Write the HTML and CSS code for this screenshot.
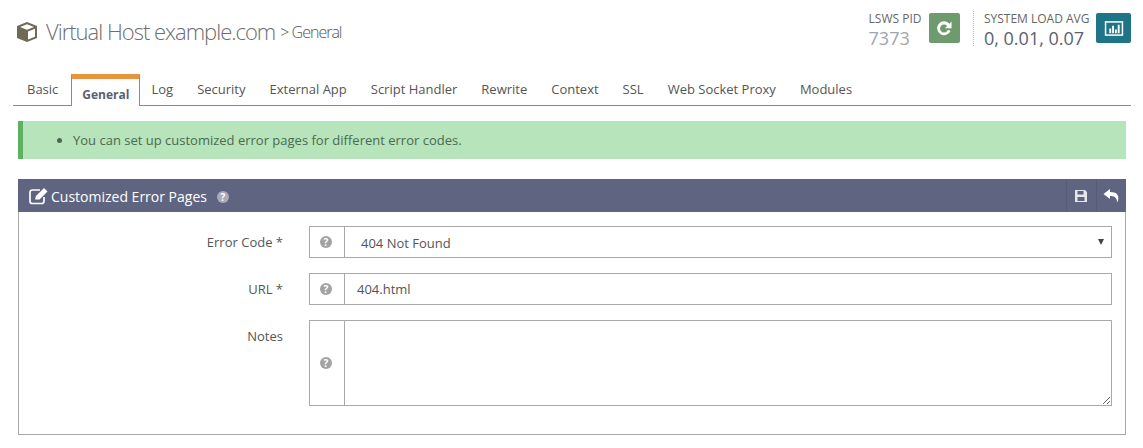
FILE: index.html
```html
<!DOCTYPE html>
<html lang="en">
<head>
<meta charset="utf-8">
<title>Virtual Host example.com</title>
<link rel="stylesheet" href="styles.css">
</head>
<body>
<header class="page-head">
  <div class="title">
    <svg class="cube" width="22" height="22" viewBox="0 0 22 22"><path d="M11 1 L21 5 V17 L11 21 L1 17 V5 Z" fill="#6f6a55"/><path d="M11 3.2 L18 6 L11 8.8 L4 6 Z" fill="#fff"/><path d="M12 10.5 L19 7.7 V15.8 L12 18.6 Z" fill="#fff"/></svg>
    <h1>Virtual Host example.com</h1><span class="crumb">&gt; General</span>
  </div>
  <div class="stats">
    <div class="stat pid">
      <div class="stat-text"><div class="stat-label">LSWS PID</div><div class="stat-value pid-value">7373</div></div>
      <span class="btn btn-green"><svg width="20" height="20" viewBox="0 0 18 18"><path d="M14 5.2 A6.3 6.3 0 1 0 15 11.5 L12.4 10.8 A3.6 3.6 0 1 1 11.8 7.2 L9.8 9.2 H15.8 V3.2 Z" fill="#fff"/></svg></span>
    </div>
    <div class="stat load">
      <div class="stat-text"><div class="stat-label">SYSTEM LOAD AVG</div><div class="stat-value">0, 0.01, 0.07</div></div>
      <span class="btn btn-teal"><svg width="20" height="15" viewBox="0 0 20 16"><rect x="1" y="1" width="18" height="14" fill="none" stroke="#fff" stroke-width="1.6"/><path d="M5 8h2v5H5zM8 5h2v8H8zM11 9h2v4h-2zM14 4h2v9h-2z" fill="#fff"/></svg></span>
    </div>
  </div>
</header>
<nav class="tabs">
  <a class="tab">Basic</a><a class="tab active">General</a><a class="tab">Log</a><a class="tab">Security</a><a class="tab">External App</a><a class="tab">Script Handler</a><a class="tab">Rewrite</a><a class="tab">Context</a><a class="tab">SSL</a><a class="tab">Web Socket Proxy</a><a class="tab">Modules</a>
</nav>
<div class="alert"><ul><li>You can set up customized error pages for different error codes.</li></ul></div>
<section class="panel">
  <div class="panel-head">
    <svg class="edit" width="20" height="18" viewBox="0 0 20 18"><path d="M15 10v4.2A2.3 2.3 0 0 1 12.700 16.500H3.300A2.300 2.300 0 0 1 1 14.200V5.300A2.300 2.300 0 0 1 3.300 3H11" fill="none" stroke="#fff" stroke-width="1.700"/><path d="M6 12.500 L7 9 L15 1 L18.500 4.500 L10.500 12.500 Z" fill="#fff"/></svg>
    <span class="panel-title">Customized Error Pages</span>
    <svg class="q q-head" viewBox="0 0 12 12"><circle cx="6" cy="6" r="6" fill="#a9abb8"/><text x="6" y="9.500" text-anchor="middle" class="q-mark">?</text></svg>
    <div class="panel-actions">
      <span class="action action-save"><svg width="14" height="14" viewBox="0 0 14 14"><path d="M1 1H11L13 3V13H1Z" fill="#e6e7ec"/><rect x="3.500" y="2" width="6" height="3.500" fill="#5f6580"/><rect x="3.500" y="8" width="7" height="4" fill="#5f6580"/></svg></span>
      <span class="action"><svg width="17" height="15" viewBox="0 0 17 15"><path d="M7 1 L0.500 6 L7 11 V8 C11 8 13.500 9 14.500 14.500 C16.500 9 15.500 4 7 4 Z" fill="#fff"/></svg></span>
    </div>
  </div>
  <div class="panel-body">
    <div class="row">
      <label class="row-label">Error Code *</label>
      <div class="group">
        <span class="addon"><svg class="q" viewBox="0 0 12 12"><circle cx="6" cy="6" r="6" fill="#a3a3a3"/><text x="6" y="9.500" text-anchor="middle" class="q-mark">?</text></svg></span>
        <div class="control select">404 Not Found<span class="caret"></span></div>
      </div>
    </div>
    <div class="row">
      <label class="row-label">URL *</label>
      <div class="group">
        <span class="addon"><svg class="q" viewBox="0 0 12 12"><circle cx="6" cy="6" r="6" fill="#a3a3a3"/><text x="6" y="9.500" text-anchor="middle" class="q-mark">?</text></svg></span>
        <div class="control">404.html</div>
      </div>
    </div>
    <div class="row">
      <label class="row-label">Notes</label>
      <div class="group tall">
        <span class="addon"><svg class="q" viewBox="0 0 12 12"><circle cx="6" cy="6" r="6" fill="#a3a3a3"/><text x="6" y="9.500" text-anchor="middle" class="q-mark">?</text></svg></span>
        <textarea class="control area"></textarea>
      </div>
    </div>
  </div>
</section>
</body>
</html>
```
FILE: styles.css
```css
* { box-sizing: border-box; }
html, body { margin: 0; padding: 0; }
body {
  width: 1143px;
  height: 448px;
  overflow: hidden;
  background: #fff;
  font-family: "Open Sans", sans-serif;
  font-size: 13px;
  color: #555;
}
.page-head {
  height: 74px;
  padding: 11px 12px 0 17px;
  display: flex;
  justify-content: space-between;
  align-items: flex-start;
}
.title { display: flex; align-items: center; margin-top: 6px; }
.cube { margin: 0 8px 0 -1px; }
.title h1 {
  margin: 0;
  padding-bottom: 2px;
  font-size: 22px;
  line-height: 28px;
  font-weight: 300;
  letter-spacing: -1px;
  color: #6e6e6e;
}
.crumb {
  margin-left: 5px;
  font-size: 16px;
  line-height: 28px;
  font-weight: 300;
  letter-spacing: -1px;
  color: #555;
}
.stats { display: flex; }
.stat { display: flex; }
.pid { padding-right: 13px; border-right: 1px dotted #bbb; height: 35px; }
.load { padding-left: 10px; }
.stat-text { margin-right: 7.5px; }
.load .stat-text { margin-right: 6.5px; }
.stat-label { font-size: 12px; line-height: 16px; color: #666; }
.stat-value { font-size: 18px; line-height: 22px; color: #5a5f73; }
.pid-value { color: #a2a5ae; }
.btn {
  width: 31px;
  height: 30px;
  margin-top: 2px;
  border-radius: 2px;
  display: flex;
  align-items: center;
  justify-content: center;
}
.btn-green { background: #6d9b6d; }
.btn-teal { width: 35px; background: #1f7488; }
.tabs {
  margin: 0 12px 0 13px;
  padding-left: 2px;
  height: 32px;
  border-bottom: 1px solid #8a8a8a;
  display: flex;
}
.tab {
  padding: 6px 12px 0;
  font-size: 13px;
  line-height: 18px;
  color: #555;
}
.tab.active {
  height: 32px;
  padding: 6px 10px 0;
  margin: 0 -1px -1px 1px;
  background: #fff;
  border: 1px solid #8a8a8a;
  border-top: 5px solid #e8943f;
  border-bottom: 0;
  font-weight: 700;
  font-size: 12px;
  line-height: 20px;
  color: #5a5f73;
}
.alert {
  margin: 15px 17px 0 18px;
  height: 38px;
  background: #b7e4bb;
  border-left: 5px solid #5cb260;
  display: flex;
  align-items: center;
  color: #4a6a50;
}
.alert ul { margin: 0; padding: 0 0 0 50px; }
.panel {
  margin: 20px 17px 0 18px;
}
.panel-head {
  height: 33px;
  background: #5f6580;
  display: flex;
  align-items: center;
  padding-left: 11px;
  color: #fff;
}
.edit { margin-right: 2px; }
.panel-title { font-size: 14px; padding-top: 2px; }
.q { width: 12px; height: 12px; display: block; }
.q-head { margin: 2px 0 0 10px; }
.q-mark { font-size: 10px; font-weight: 700; fill: #fff; font-family: "Open Sans", sans-serif; }
.panel-actions { margin-left: auto; display: flex; height: 100%; }
.action {
  width: 30px;
  display: flex;
  align-items: center;
  justify-content: center;
  border-left: 1px solid #575d77;
}
.action-save { padding-right: 2px; }
.panel-body {
  height: 223px;
  border: 1px solid #a9a9a9;
  border-top: 0;
  padding: 14px 13px 0 0;
}
.row { display: flex; margin-bottom: 15px; }
.row-label {
  width: 264px;
  text-align: right;
  padding-top: 7px;
  line-height: 18px;
  color: #555;
}
.group {
  margin-left: 26px;
  flex: 1;
  height: 32px;
  display: flex;
  border: 1px solid #a9a9a9;
}
.group.tall { height: 86px; }
.addon {
  width: 35px;
  flex: none;
  border-right: 1px solid #a9a9a9;
  padding-right: 2px;
  display: flex;
  align-items: center;
  justify-content: center;
}
.control {
  flex: 1;
  display: flex;
  align-items: center;
  padding: 0 12px;
  font-size: 13px;
  color: #555;
}
.select { padding: 2px 12px 0 16px; position: relative; }
.caret {
  position: absolute;
  right: 7px;
  top: 12px;
  border-left: 3.500px solid transparent;
  border-right: 3.500px solid transparent;
  border-top: 6px solid #444;
}
.area {
  border: 0;
  outline: 0;
  margin: 0;
  display: block;
  height: 100%;
  resize: both;
  background: #fff;
}
```
